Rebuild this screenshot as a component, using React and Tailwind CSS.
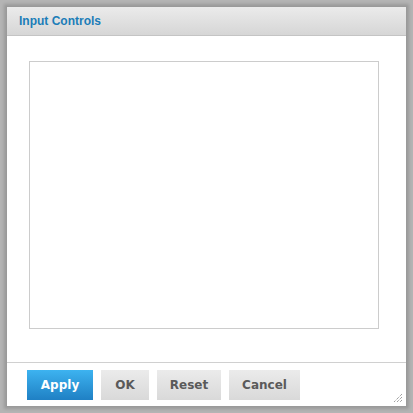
export default function App() {
  const font = { fontFamily: '"DejaVu Sans", Verdana, sans-serif' };
  return (
    <div
      className="w-[413px] h-[413px] bg-[#b4b4b4] p-[6px]"
      style={font}
    >
      <div className="w-full h-full bg-white border border-[#9a9a9a] flex flex-col shadow-[0_0_3px_2px_rgba(0,0,0,0.15)]">
        {/* Header */}
        <div className="h-[29px] bg-gradient-to-b from-[#ebebeb] to-[#d6d6d6] border-b border-[#c4c4c4] flex items-center pl-[12px]">
          <span className="text-[12px] font-bold text-[#1b7db8] font-['Liberation_Sans',Arial,sans-serif]">
            Input Controls
          </span>
        </div>

        {/* Body */}
        <div className="flex-1 flex pl-[22px] pr-[27px] pt-[25px] pb-[33px]">
          <div className="flex-1 border border-[#cccccc] bg-white" />
        </div>

        {/* Footer */}
        <div className="relative h-[44px] border-t border-[#d0d0d0] flex items-start gap-[8px] pl-[20px] pt-[7px]">
          <button className="h-[30px] w-[66px] text-[12px] font-bold text-white bg-gradient-to-b from-[#3db3f0] to-[#1f80c4]">
            Apply
          </button>
          <button className="h-[30px] w-[48px] text-[12px] font-bold text-[#5a5a5a] bg-gradient-to-b from-[#ebebeb] to-[#d9d9d9]">
            OK
          </button>
          <button className="h-[30px] w-[64px] text-[12px] font-bold text-[#5a5a5a] bg-gradient-to-b from-[#ebebeb] to-[#d9d9d9]">
            Reset
          </button>
          <button className="h-[30px] w-[71px] text-[12px] font-bold text-[#5a5a5a] bg-gradient-to-b from-[#ebebeb] to-[#d9d9d9]">
            Cancel
          </button>
          <svg className="absolute right-[3px] bottom-[3px]" width="10" height="10" viewBox="0 0 10 10">
            <path d="M9 1L1 9M9 4L4 9M9 7L7 9" stroke="#777" strokeWidth="1" strokeDasharray="1 1" />
          </svg>
        </div>
      </div>
    </div>
  );
}
